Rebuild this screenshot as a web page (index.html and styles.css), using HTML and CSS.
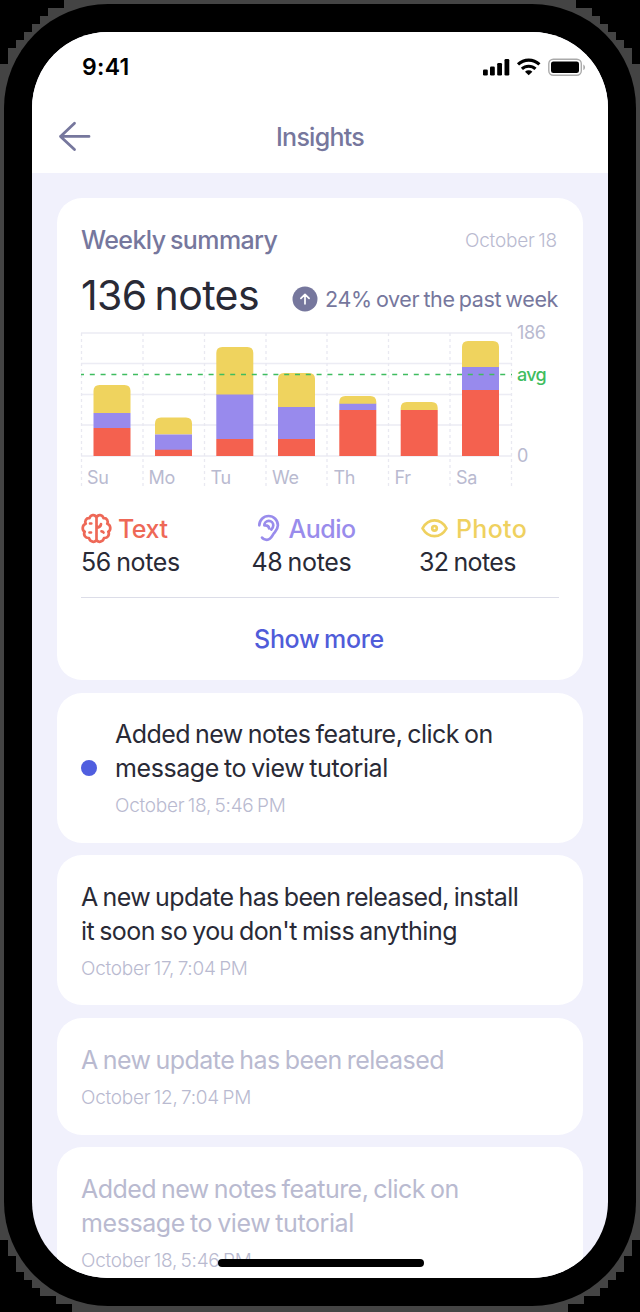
FILE: index.html
```html
<!DOCTYPE html>
<html lang="en">
<head>
<meta charset="utf-8">
<title>Insights</title>
<link rel="stylesheet" href="styles.css">
</head>
<body>
<div class="edge">
<div class="shell">
<div class="screen">
  <header class="top">
    <div class="status">
      <span class="time">9:41</span>
      <svg class="status-icons" width="104" height="20" viewBox="0 0 104 20">
        <rect x="1" y="12.500" width="4.800" height="6" rx="1.300"/><rect x="8" y="9.500" width="4.800" height="9" rx="1.300"/><rect x="15.200" y="6" width="4.800" height="12.500" rx="1.300"/><rect x="22.500" y="2" width="4.800" height="16.500" rx="1.300"/>
        <g fill="none" stroke="#000" stroke-width="3.100"><path d="M36 7.400a15.500 15.500 0 0 1 21.400 0"/><path d="M39.900 11.900a9.900 9.900 0 0 1 13.600 0"/></g><path d="M43 14.800a5.500 5.500 0 0 1 7.400 0l-3.700 3.500z"/>
        <rect x="66.800" y="2.200" width="32.500" height="16.100" rx="4.500" fill="none" stroke="#aaa" stroke-width="1.400"/><rect x="69" y="4.400" width="28" height="11.700" rx="2.400"/><path d="M101.300 7.400c2.300 1 2.300 4.700 0 5.700z" fill="#aaa"/>
      </svg>
    </div>
    <nav class="nav">
      <svg class="back" width="34" height="32" viewBox="0 0 34 32"><path d="M32 16.400H3.500M17.500 3.200 3.500 16.400l14 13.200" /></svg>
      <h1 class="title">Insights</h1>
    </nav>
  </header>
  <main class="feed">
    <section class="card summary">
      <div class="row head"><h2 class="heading">Weekly summary</h2><span class="today">October 18</span></div>
      <div class="row total"><strong class="count">136 notes</strong>
        <span class="trend"><svg width="26" height="26" viewBox="0 0 26 26"><circle cx="13" cy="13" r="12.500" fill="#76779d"/><path d="M13 17.800V8.500M8.900 12.400 13 8.300l4.100 4.100" fill="none" stroke="#fff" stroke-width="1.700" stroke-linecap="round" stroke-linejoin="round"/></svg><span class="trend-text">24% over the past week</span></span></div>
      <svg class="chart" width="480" height="170" viewBox="80 323 480 170">
        <path class="grid" d="M81 333H512M81 363.500H512M81 394.500H512M81 425H512M81 456H512"/>
        <path class="ticks" d="M81.500 333V487M143 333V487M204.500 333V487M266 333V487M327 333V487M388.500 333V487M450 333V487M511.500 333V487"/>
        <g class="photo-bar">
          <path d="M93.500 413V391q0-6 6-6h25q6 0 6 6V413z"/><path d="M155 434.500V423.500q0-6 6-6h25q6 0 6 6V434.500z"/><path d="M216.300 395V353q0-6 6-6h25q6 0 6 6V395z"/><path d="M278 407V379q0-6 6-6h25q6 0 6 6V407z"/><path d="M339.300 404V402q0-6 6-6h25q6 0 6 6V404z"/><path d="M400.700 410V408q0-6 6-6h25q6 0 6 6V410z"/><path d="M462 367V347q0-6 6-6h25q6 0 6 6V367z"/>
        </g>
        <path class="audio-bar" d="M93.500 413h37V428h-37zM155 434.500h37V450h-37zM216.300 394.500h37V439h-37zM278 407h37V439h-37zM339.300 403.700h37V410h-37zM462 367h37V390h-37z"/>
        <path class="text-bar" d="M93.500 428h37V456h-37zM155 449.800h37V456h-37zM216.300 439h37V456h-37zM278 439h37V456h-37zM339.300 410h37V456h-37zM400.700 410h37V456h-37zM462 390h37V456h-37z"/>
        <path class="average" d="M81 374.500H512"/>
        <g class="days"><text x="87" y="484">Su</text><text x="148.500" y="484">Mo</text><text x="210.500" y="484">Tu</text><text x="272" y="484">We</text><text x="333.500" y="484">Th</text><text x="394.500" y="484">Fr</text><text x="456" y="484">Sa</text><text x="517" y="339">186</text><text x="517" y="462">0</text></g>
        <text class="avg" x="517" y="381">avg</text>
      </svg>
      <div class="stats">
        <div class="stat">
          <div class="kind text"><svg width="32" height="32" viewBox="0 0 32 32"><path d="M15.500 4v23M15.500 4.500C14 1 9.500 1.500 8.500 5.200C5 4.800 3.300 8.500 4.800 10.700C1 12 .8 17 3.700 18.700C2 22 4.500 25.200 8 25C9 29.300 14 29.800 15.500 27M15.500 4.500C17 1 21.500 1.500 22.500 5.200C26 4.800 27.700 8.500 26.200 10.700C30 12 30.200 17 27.300 18.700C29 22 26.500 25.200 23 25C22 29.300 17 29.800 15.500 27M9 10.500h1.300M8.500 19.500h1.500M15.500 14.500c2.800 0 4.200-1.200 4.500-3.300M20.500 18.300c.9 0 1.600.4 2 1.200"/></svg><span>Text</span></div>
          <div class="amount">56 notes</div>
        </div>
        <div class="stat">
          <div class="kind audio"><svg width="32" height="32" viewBox="0 0 32 32"><path d="M7.300 12.300a9.300 9.300 0 0 1 18.600 0c0 4-2.300 5.900-4 8-2 2.700-2.600 6.500-7.100 6.500-2.200 0-3.900-.9-4.800-2.200M12.300 12.300a4.500 4.500 0 0 1 9 0c0 2-.8 3-2 4.300M12.600 12.300c2.700-.2 4.200.8 4.500 3"/></svg><span>Audio</span></div>
          <div class="amount">48 notes</div>
        </div>
        <div class="stat">
          <div class="kind photo"><svg width="32" height="32" viewBox="0 0 32 32"><path d="M3.500 15.300C9.500 4.800 21.500 4.800 27.500 15.300 21.500 25.800 9.500 25.800 3.500 15.300z"/><circle cx="15.500" cy="15.300" r="2.300"/></svg><span>Photo</span></div>
          <div class="amount narrow">32 notes</div>
        </div>
      </div>
      <a class="more">Show more</a>
    </section>
    <article class="card note unread"><i class="dot"></i><div><p class="msg"><span class="m1">Added new notes feature, click on</span><br><span class="m2">message to view tutorial</span></p><time class="date">October 18, 5:46 PM</time></div></article>
    <article class="card note"><div><p class="msg"><span class="m3">A new update has been released, install</span><br><span class="m4">it soon so you don't miss anything</span></p><time class="date">October 17, 7:04 PM</time></div></article>
    <article class="card note read"><div><p class="msg"><span class="m4">A new update has been released</span></p><time class="date">October 12, 7:04 PM</time></div></article>
    <article class="card note read last"><div><p class="msg"><span class="m1">Added new notes feature, click on</span><br><span class="m2">message to view tutorial</span></p><time class="date">October 18, 5:46 PM</time></div></article>
  </main>
  <div class="home"></div>
</div>
</div>
</div>
</body>
</html>
```
FILE: styles.css
```css
* { box-sizing: border-box; }
body { margin: 0; background: #000; font-family: Inter, "Liberation Sans", sans-serif; color: #292a36; word-spacing: -1.5px; }
h1, h2, p { margin: 0; font-weight: 500; }
svg { display: block; flex: none; }
.edge { width: 640px; height: 1312px; padding: 4px 4px 6px; background: #444;
  clip-path: polygon(64px 0, 576px 0, 576px 8px, 592px 8px, 592px 16px, 600px 16px, 600px 24px, 608px 24px, 608px 32px, 616px 32px, 616px 40px, 624px 40px, 624px 48px, 632px 48px, 632px 64px, 640px 64px, 640px 1240px, 632px 1240px, 632px 1256px, 624px 1256px, 624px 1272px, 616px 1272px, 616px 1280px, 608px 1280px, 608px 1288px, 600px 1288px, 600px 1296px, 584px 1296px, 584px 1304px, 568px 1304px, 568px 1312px, 72px 1312px, 72px 1304px, 56px 1304px, 56px 1296px, 40px 1296px, 40px 1288px, 32px 1288px, 32px 1280px, 24px 1280px, 24px 1272px, 16px 1272px, 16px 1256px, 8px 1256px, 8px 1240px, 0 1240px, 0 64px, 8px 64px, 8px 48px, 16px 48px, 16px 40px, 24px 40px, 24px 32px, 32px 32px, 32px 24px, 40px 24px, 40px 16px, 48px 16px, 48px 8px, 64px 8px); }
.shell { height: 1302px; padding: 28px; border-radius: 104px; background: #000; }
.screen { position: relative; height: 1246px; overflow: hidden; border-radius: 76px; background: #f1f1fc; }
.top { height: 141px; background: #fff; }
.status { display: flex; justify-content: space-between; padding: 25px 22px 0 50px; height: 69px; }
.time { font-size: 23px; line-height: 21px; font-weight: 600; letter-spacing: .3px; color: #000; }
.nav { display: grid; grid-template-columns: 34px 1fr 34px; padding: 19px 25px 0; height: 72px; }
.back path { fill: none; stroke: #76779d; stroke-width: 2.8; stroke-linecap: round; stroke-linejoin: round; }
.title { text-align: center; font-size: 25px; line-height: 34px; font-weight: 450; letter-spacing: -.75px; color: #76779d; }
.feed { display: flex; flex-direction: column; gap: 12.5px; padding: 25px; }
.card { flex: none; border-radius: 25px; background: #fff; }
.summary { height: 482px; padding: 25px 24px 0; }
.row { display: flex; justify-content: space-between; align-items: center; }
.head { height: 34px; padding-right: 2px; }
.heading { font-size: 25px; letter-spacing: -.6px; color: #76779d; }
.today { font-size: 19px; font-weight: 300; letter-spacing: -.2px; color: #b9bad0; }
.total { height: 66px; }
.count { font-size: 41px; line-height: 66px; font-weight: 400; letter-spacing: -.6px; word-spacing: -3px; margin-top: 10px; }
.trend { display: flex; align-items: center; gap: 7px; margin-top: 17px; padding-right: 1px; height: 66px; }
.trend-text { font-size: 21.5px; letter-spacing: -.36px; color: #76779d; white-space: nowrap; }
.chart { margin-left: -1px; }
.grid { stroke: #ececf4; stroke-width: 1.5; }
.ticks { stroke: #e9e9f1; stroke-width: 1.3; stroke-dasharray: 3 3; }
.photo-bar { fill: #efd35e; }
.audio-bar { fill: #988aed; }
.text-bar { fill: #f4614f; }
.average { stroke: #3fbd5f; stroke-width: 1.5; stroke-dasharray: 5 5.8; stroke-dashoffset: 2; }
.days { font-size: 18px; fill: #b9bad0; letter-spacing: -.3px; }
.avg { font-size: 18px; font-weight: 500; fill: #3fbd5f; letter-spacing: -.7px; }
.stats { display: grid; grid-template-columns: 170.5px 167.5px 1fr; height: 105px; padding-top: 19px; border-bottom: 1.5px solid #dcdde8; }
.stat { line-height: 34px; }
.kind { display: flex; align-items: center; gap: 5px; height: 33px; font-size: 25px; font-weight: 500; letter-spacing: -.5px; }
.kind path, .kind circle { fill: none; stroke: currentColor; stroke-width: 2.7; stroke-linecap: round; stroke-linejoin: round; }
.text { color: #ee6857; }
.audio { color: #998cec; }
.photo { color: #efd15f; letter-spacing: .3px; }
.amount { font-size: 25px; letter-spacing: -.35px; }
.narrow { letter-spacing: -.6px; }
.more { display: block; text-align: center; line-height: 83px; margin-right: 2px; font-size: 25px; font-weight: 500; letter-spacing: -.35px; color: #505cd9; }
.note { display: flex; align-items: center; padding: 24.5px 24px 24px; }
.dot { width: 16px; height: 16px; margin-right: 18px; border-radius: 50%; background: #505edf; }
.msg { font-size: 25px; line-height: 34px; white-space: nowrap; font-weight: 440; }
.m1 { letter-spacing: -.54px; }
.m2 { letter-spacing: -.42px; }
.m3 { letter-spacing: -.59px; }
.m4 { letter-spacing: -.53px; }
.date { display: block; margin-top: 8px; font-size: 19px; font-weight: 300; line-height: 25.5px; letter-spacing: -.27px; color: #b9bad0; }
.read { padding-top: 25.5px; }
.last { padding-top: 24.5px; }
.read .msg { color: #b9bad0; }
.home { position: absolute; left: 186px; top: 1227px; width: 206px; height: 8px; border-radius: 4px; background: #000; }
```
